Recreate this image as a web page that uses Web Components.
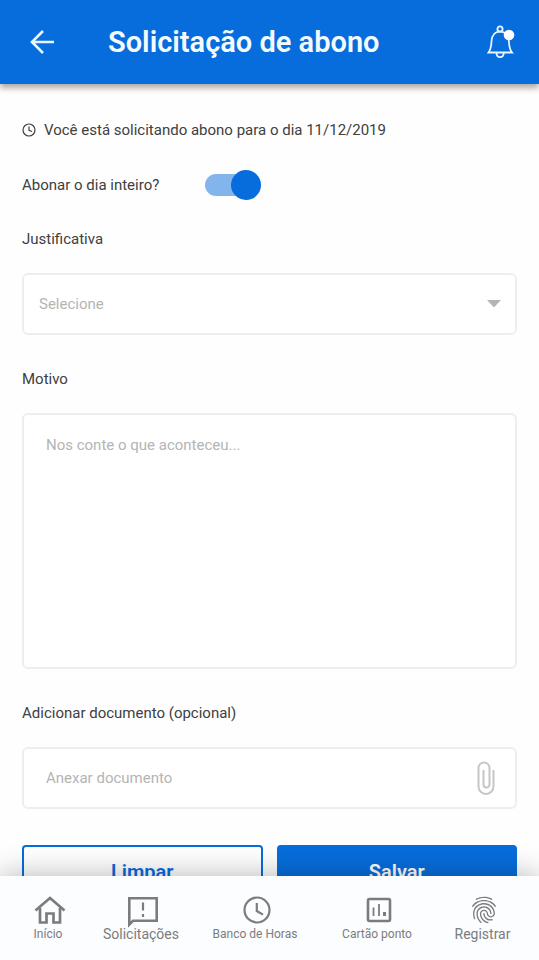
<!DOCTYPE html>
<html lang="pt-BR">
<head>
<meta charset="utf-8">
<meta name="viewport" content="width=device-width, initial-scale=1">
<title>Solicitação de abono</title>
<style>
body {
    margin: 0;
    font-family: Roboto, "Liberation Sans", sans-serif;
    font-size: 15px;
    line-height: 20px;
    color: #404040;
    background: #fefefe;
    --blue: #076ddc;
    --line: #eceeef;
    --hint: #b4b4b4;
}
</style>
</head>
<body>

<abono-page>
    <app-header slot="header">Solicitação de abono</app-header>

    <info-line>Você está solicitando abono para o dia 11/12/2019</info-line>
    <toggle-switch label="Abonar o dia inteiro?" checked></toggle-switch>
    <select-field label="Justificativa" hint="Selecione"></select-field>
    <area-field label="Motivo" hint="Nos conte o que aconteceu..."></area-field>
    <attach-field label="Adicionar documento (opcional)" hint="Anexar documento"></attach-field>
    <button-row>
        <app-button kind="outline">Limpar</app-button>
        <app-button kind="solid">Salvar</app-button>
    </button-row>

    <tab-bar slot="footer">
        <tab-item icon="home">Início</tab-item>
        <tab-item icon="feedback" large>Solicitações</tab-item>
        <tab-item icon="clock">Banco de Horas</tab-item>
        <tab-item icon="chart">Cartão ponto</tab-item>
        <tab-item icon="finger" large>Registrar</tab-item>
    </tab-bar>
</abono-page>

<script>
const icons = {
    home: `<svg width="32" height="28" viewBox="0 0 32 28" fill="none" stroke="currentColor" stroke-width="2.7">
        <path d="M1.5 14.5 16 2l14.5 12.5"/><path d="M6 12v14.5h6.5v-9h7v9H26V12"/></svg>`,
    feedback: `<svg width="32" height="28" viewBox="0 0 32 28" fill="none" stroke="currentColor" stroke-width="2.6">
        <path d="M2.3 28.5V2.3h27.4v22.5H6z"/><path d="M16 6.5v8M16 18v3" stroke-width="2.2"/></svg>`,
    clock: `<svg width="28" height="28" viewBox="0 0 28 28" fill="none" stroke="currentColor" stroke-width="2.2">
        <circle cx="14" cy="14" r="12.5"/><path d="M13.8 7v8l6.2 3.6"/></svg>`,
    chart: `<svg width="26" height="28" viewBox="0 0 26 28" fill="none" stroke="currentColor" stroke-width="2.6">
        <rect x="2" y="3" width="22" height="22" rx="1.5"/><path d="M7.5 11.5V20M13 8v12" stroke-width="1.8"/><path d="M18.5 16v4" stroke-width="3"/></svg>`,
    finger: `<svg width="28" height="28" viewBox="1.5 1.5 21 21" fill="currentColor">
        <path d="M17.81 4.47c-.08 0-.16-.02-.23-.06C15.66 3.42 14 3 12.01 3c-1.98 0-3.86.47-5.57 1.41-.24.13-.54.04-.68-.2-.13-.24-.04-.55.2-.68C7.82 2.52 9.86 2 12.01 2c2.13 0 3.99.47 6.03 1.52.25.13.34.43.21.67-.09.18-.26.28-.44.28zM3.5 9.72c-.1 0-.2-.03-.29-.09-.23-.16-.28-.47-.12-.7.99-1.4 2.25-2.5 3.75-3.27C9.98 4.04 14 4.03 17.15 5.65c1.5.77 2.76 1.86 3.75 3.25.16.22.11.54-.12.7-.23.16-.54.11-.7-.12-.9-1.26-2.04-2.25-3.39-2.94-2.87-1.47-6.54-1.47-9.4.01-1.36.7-2.5 1.7-3.4 2.96-.08.14-.23.21-.39.21zm6.25 12.07c-.13 0-.26-.05-.35-.15-.87-.87-1.34-1.43-2.01-2.64-.69-1.23-1.05-2.73-1.05-4.34 0-2.97 2.54-5.39 5.66-5.39s5.66 2.42 5.66 5.39c0 .28-.22.5-.5.5s-.5-.22-.5-.5c0-2.42-2.09-4.39-4.66-4.39-2.57 0-4.66 1.97-4.66 4.39 0 1.44.32 2.77.93 3.85.64 1.15 1.08 1.64 1.85 2.42.19.2.19.51 0 .71-.11.1-.24.15-.37.15zm7.17-1.85c-1.19 0-2.24-.3-3.1-.89-1.49-1.01-2.38-2.65-2.38-4.39 0-.28.22-.5.5-.5s.5.22.5.5c0 1.41.72 2.74 1.94 3.56.71.48 1.54.71 2.54.71.24 0 .64-.03 1.04-.1.27-.05.53.13.58.41.05.27-.13.53-.41.58-.57.11-1.07.12-1.21.12zM14.91 22c-.04 0-.09-.01-.13-.02-1.59-.44-2.63-1.03-3.72-2.1-1.4-1.39-2.17-3.24-2.17-5.22 0-1.62 1.38-2.94 3.08-2.94 1.7 0 3.08 1.32 3.08 2.94 0 1.07.93 1.94 2.08 1.94s2.08-.87 2.08-1.94c0-3.77-3.25-6.83-7.25-6.83-2.84 0-5.44 1.58-6.61 4.03-.39.81-.59 1.76-.59 2.8 0 .78.07 2.01.67 3.61.1.26-.03.55-.29.64-.26.1-.55-.04-.64-.29-.49-1.31-.73-2.61-.73-3.96 0-1.2.23-2.29.68-3.24 1.33-2.79 4.28-4.6 7.51-4.6 4.55 0 8.25 3.51 8.25 7.83 0 1.62-1.38 2.94-3.08 2.94s-3.08-1.32-3.08-2.94c0-1.07-.93-1.94-2.08-1.94s-2.08.87-2.08 1.94c0 1.71.66 3.31 1.87 4.51.95.94 1.86 1.46 3.27 1.85.27.07.42.35.35.61-.05.23-.26.38-.47.38z"/></svg>`,
    back: `<svg width="24" height="24" viewBox="0 0 24 24" fill="none" stroke="currentColor" stroke-width="2.6">
        <path d="M24 12H2M13 1 2 12l11 11"/></svg>`,
    bell: `<svg width="28" height="34" viewBox="0 0 28 34" fill="none" stroke="currentColor" stroke-width="1.8">
        <circle cx="13" cy="4" r="2.6"/><path d="M1.5 27.5H25c-2.4-3-2.8-5-3.1-11C21.4 9.5 18 6.6 13 6.600S4.900 9.500 4.500 16.500c-.3 6-.6 8-3 11z"/>
        <path d="M9.5 28c.2 5.600 7 5.600 7.200 0"/><circle cx="22" cy="10" r="5.3" fill="#fff" stroke="none"/></svg>`,
    smallClock: `<svg width="14" height="14" viewBox="0 0 14 14" fill="none" stroke="currentColor" stroke-width="1.2">
        <circle cx="7" cy="7" r="6"/><path d="M7 3.5v3.8l3 1.2"/></svg>`,
    arrow: `<svg width="14" height="8" viewBox="0 0 14 8" fill="#b4b4b4"><path d="M0 0h14L7 7.5z"/></svg>`,
    clip: `<svg width="18" height="34" viewBox="0 0 18 34" fill="none" stroke="#c6c6c6" stroke-width="2">
        <path d="M16.5 9v16.500a7.500 7.500 0 0 1-15 0V7a5.500 5.500 0 0 1 11 0v16.500a3 3 0 0 1-6 0V9"/></svg>`
}

// opens the shadow root and fills it from a template
class BaseElement extends HTMLElement {
    constructor(){
        super()
        const template = document.createElement('template')
        template.innerHTML = this.render()
        this.attachShadow({mode:'open'}).appendChild(template.content.cloneNode(true))
    }

    get label(){
        return this.getAttribute('label')
    }

    get hint(){
        return this.getAttribute('hint')
    }
}

class AbonoPage extends BaseElement {
    render(){
        return `
<style>
:host{
    display: flex;
    flex-direction: column;
    height: 100vh;
}
main{
    flex: 1;
    min-height: 0;
    overflow-y: auto;
    scrollbar-width: none;
}
form{
    display: flex;
    flex-direction: column;
    gap: 34px;
    padding: 36px 22px;
}
</style>
<slot name="header"></slot>
<main><form><slot></slot></form></main>
<slot name="footer"></slot>`
    }
}

class AppHeader extends BaseElement {
    render(){
        return `
<style>
:host{
    display: block;
    position: relative;
    z-index: 1;
    background: var(--blue);
    color: #f4fbff;
    box-shadow: 0 4px 6px rgba(60,40,30,0.4);
}
header{
    display: flex;
    align-items: center;
    height: 84px;
    padding: 0 24px 0 30px;
}
h1{
    flex: 1;
    margin: 0 0 0 54px;
    font-size: 29px;
    line-height: 36px;
    font-weight: 600;
}
button{
    display: flex;
    padding: 0;
    border: 0;
    background: none;
    color: #e8f6ff;
}
</style>
<header>
    <button type="button" aria-label="Voltar">${icons.back}</button>
    <h1><slot></slot></h1>
    <button type="button" aria-label="Notificações">${icons.bell}</button>
</header>`
    }
}

class InfoLine extends BaseElement {
    render(){
        return `
<style>
:host{
    display: flex;
    align-items: center;
    gap: 8px;
}
svg{
    flex: none;
}
</style>
${icons.smallClock}<span><slot></slot></span>`
    }
}

class ToggleSwitch extends BaseElement {
    render(){
        return `
<style>
:host{
    display: flex;
    align-items: center;
    gap: 46px;
    height: 22px;
    margin-bottom: -1px;
}
input{
    appearance: none;
    display: flex;
    align-items: center;
    width: 44px;
    height: 22px;
    margin: 0;
    border-radius: 11px;
    background: #c9d2dc;
}
input::before{
    content: '';
    flex: none;
    width: 30px;
    height: 30px;
    border-radius: 50%;
    background: #9aa5b1;
}
input:checked{
    justify-content: flex-end;
    background: #83b5ed;
}
input:checked::before{
    margin-right: -12px;
    background: var(--blue);
}
</style>
<label for="toggle">${this.label}</label>
<input id="toggle" type="checkbox" role="switch" ${this.hasAttribute('checked') ? 'checked' : ''}>`
    }
}

const fieldStyle = `
:host{
    display: flex;
    flex-direction: column;
    gap: 24px;
}
.box{
    display: flex;
    align-items: center;
    box-sizing: border-box;
    min-height: 62px;
    border: 2px solid var(--line);
    border-radius: 6px;
    background: #fff;
}
select, input, textarea{
    flex: 1;
    min-width: 0;
    margin: 0;
    border: 0;
    outline: 0;
    background: none;
    font: inherit;
    color: var(--hint);
}
::placeholder{
    color: var(--hint);
    opacity: 1;
}
`

class SelectField extends BaseElement {
    render(){
        return `
<style>
${fieldStyle}
.box{
    display: grid;
    align-items: center;
}
select{
    grid-area: 1 / 1;
    appearance: none;
    height: 58px;
    padding: 0 40px 0 15px;
}
svg{
    grid-area: 1 / 1;
    justify-self: end;
    margin-right: 14px;
    pointer-events: none;
}
</style>
<label for="field">${this.label}</label>
<div class="box">
    <select id="field"><option>${this.hint}</option></select>
    ${icons.arrow}
</div>`
    }
}

class AreaField extends BaseElement {
    render(){
        return `
<style>
${fieldStyle}
textarea{
    height: 252px;
    box-sizing: border-box;
    padding: 20px 22px;
    resize: none;
}
</style>
<label for="field">${this.label}</label>
<div class="box"><textarea id="field" placeholder="${this.hint}"></textarea></div>`
    }
}

class AttachField extends BaseElement {
    render(){
        return `
<style>
${fieldStyle}
input{
    padding: 0 22px;
}
button{
    display: flex;
    margin-right: 20px;
    padding: 0;
    border: 0;
    background: none;
}
</style>
<label for="field">${this.label}</label>
<div class="box">
    <input id="field" type="text" readonly placeholder="${this.hint}">
    <button type="button" aria-label="Anexar">${icons.clip}</button>
</div>`
    }
}

class ButtonRow extends BaseElement {
    render(){
        return `
<style>
:host{
    display: grid;
    grid-template-columns: 1fr 1fr;
    gap: 14px;
    margin-top: 2px;
}
</style>
<slot></slot>`
    }
}

class AppButton extends BaseElement {
    render(){
        return `
<style>
:host{
    display: flex;
}
button{
    flex: 1;
    height: 54px;
    padding: 0;
    border: 2px solid var(--blue);
    border-radius: 4px;
    background: #fff;
    color: var(--blue);
    font: inherit;
    font-size: 20px;
    font-weight: 600;
}
:host([kind="solid"]) button{
    background: var(--blue);
    color: #fff;
}
</style>
<button type="button"><slot></slot></button>`
    }
}

class TabBar extends BaseElement {
    render(){
        return `
<style>
:host{
    display: block;
    position: relative;
    z-index: 1;
    background: #fbfdff;
    box-shadow: 0 0 30px rgba(0,0,0,0.3);
}
nav{
    display: grid;
    grid-template-columns: 96fr 90fr 138fr 106fr 105fr;
    height: 84px;
    padding-right: 4px;
}
</style>
<nav><slot></slot></nav>`
    }
}

class TabItem extends BaseElement {
    render(){
        return `
<style>
:host{
    display: flex;
    justify-content: center;
}
a{
    display: flex;
    flex-direction: column;
    align-items: center;
    padding-top: 20px;
    font-size: 12px;
    color: #7c7c7c;
    text-decoration: none;
    white-space: nowrap;
}
:host([large]) a{
    font-size: 14px;
}
svg{
    flex: none;
    margin-left: 4px;
    overflow: visible;
}
</style>
<a href="#">${icons[this.getAttribute('icon')]}<slot></slot></a>`
    }
}

window.customElements.define('abono-page', AbonoPage)
window.customElements.define('app-header', AppHeader)
window.customElements.define('info-line', InfoLine)
window.customElements.define('toggle-switch', ToggleSwitch)
window.customElements.define('select-field', SelectField)
window.customElements.define('area-field', AreaField)
window.customElements.define('attach-field', AttachField)
window.customElements.define('button-row', ButtonRow)
window.customElements.define('app-button', AppButton)
window.customElements.define('tab-bar', TabBar)
window.customElements.define('tab-item', TabItem)
</script>
</body>
</html>
